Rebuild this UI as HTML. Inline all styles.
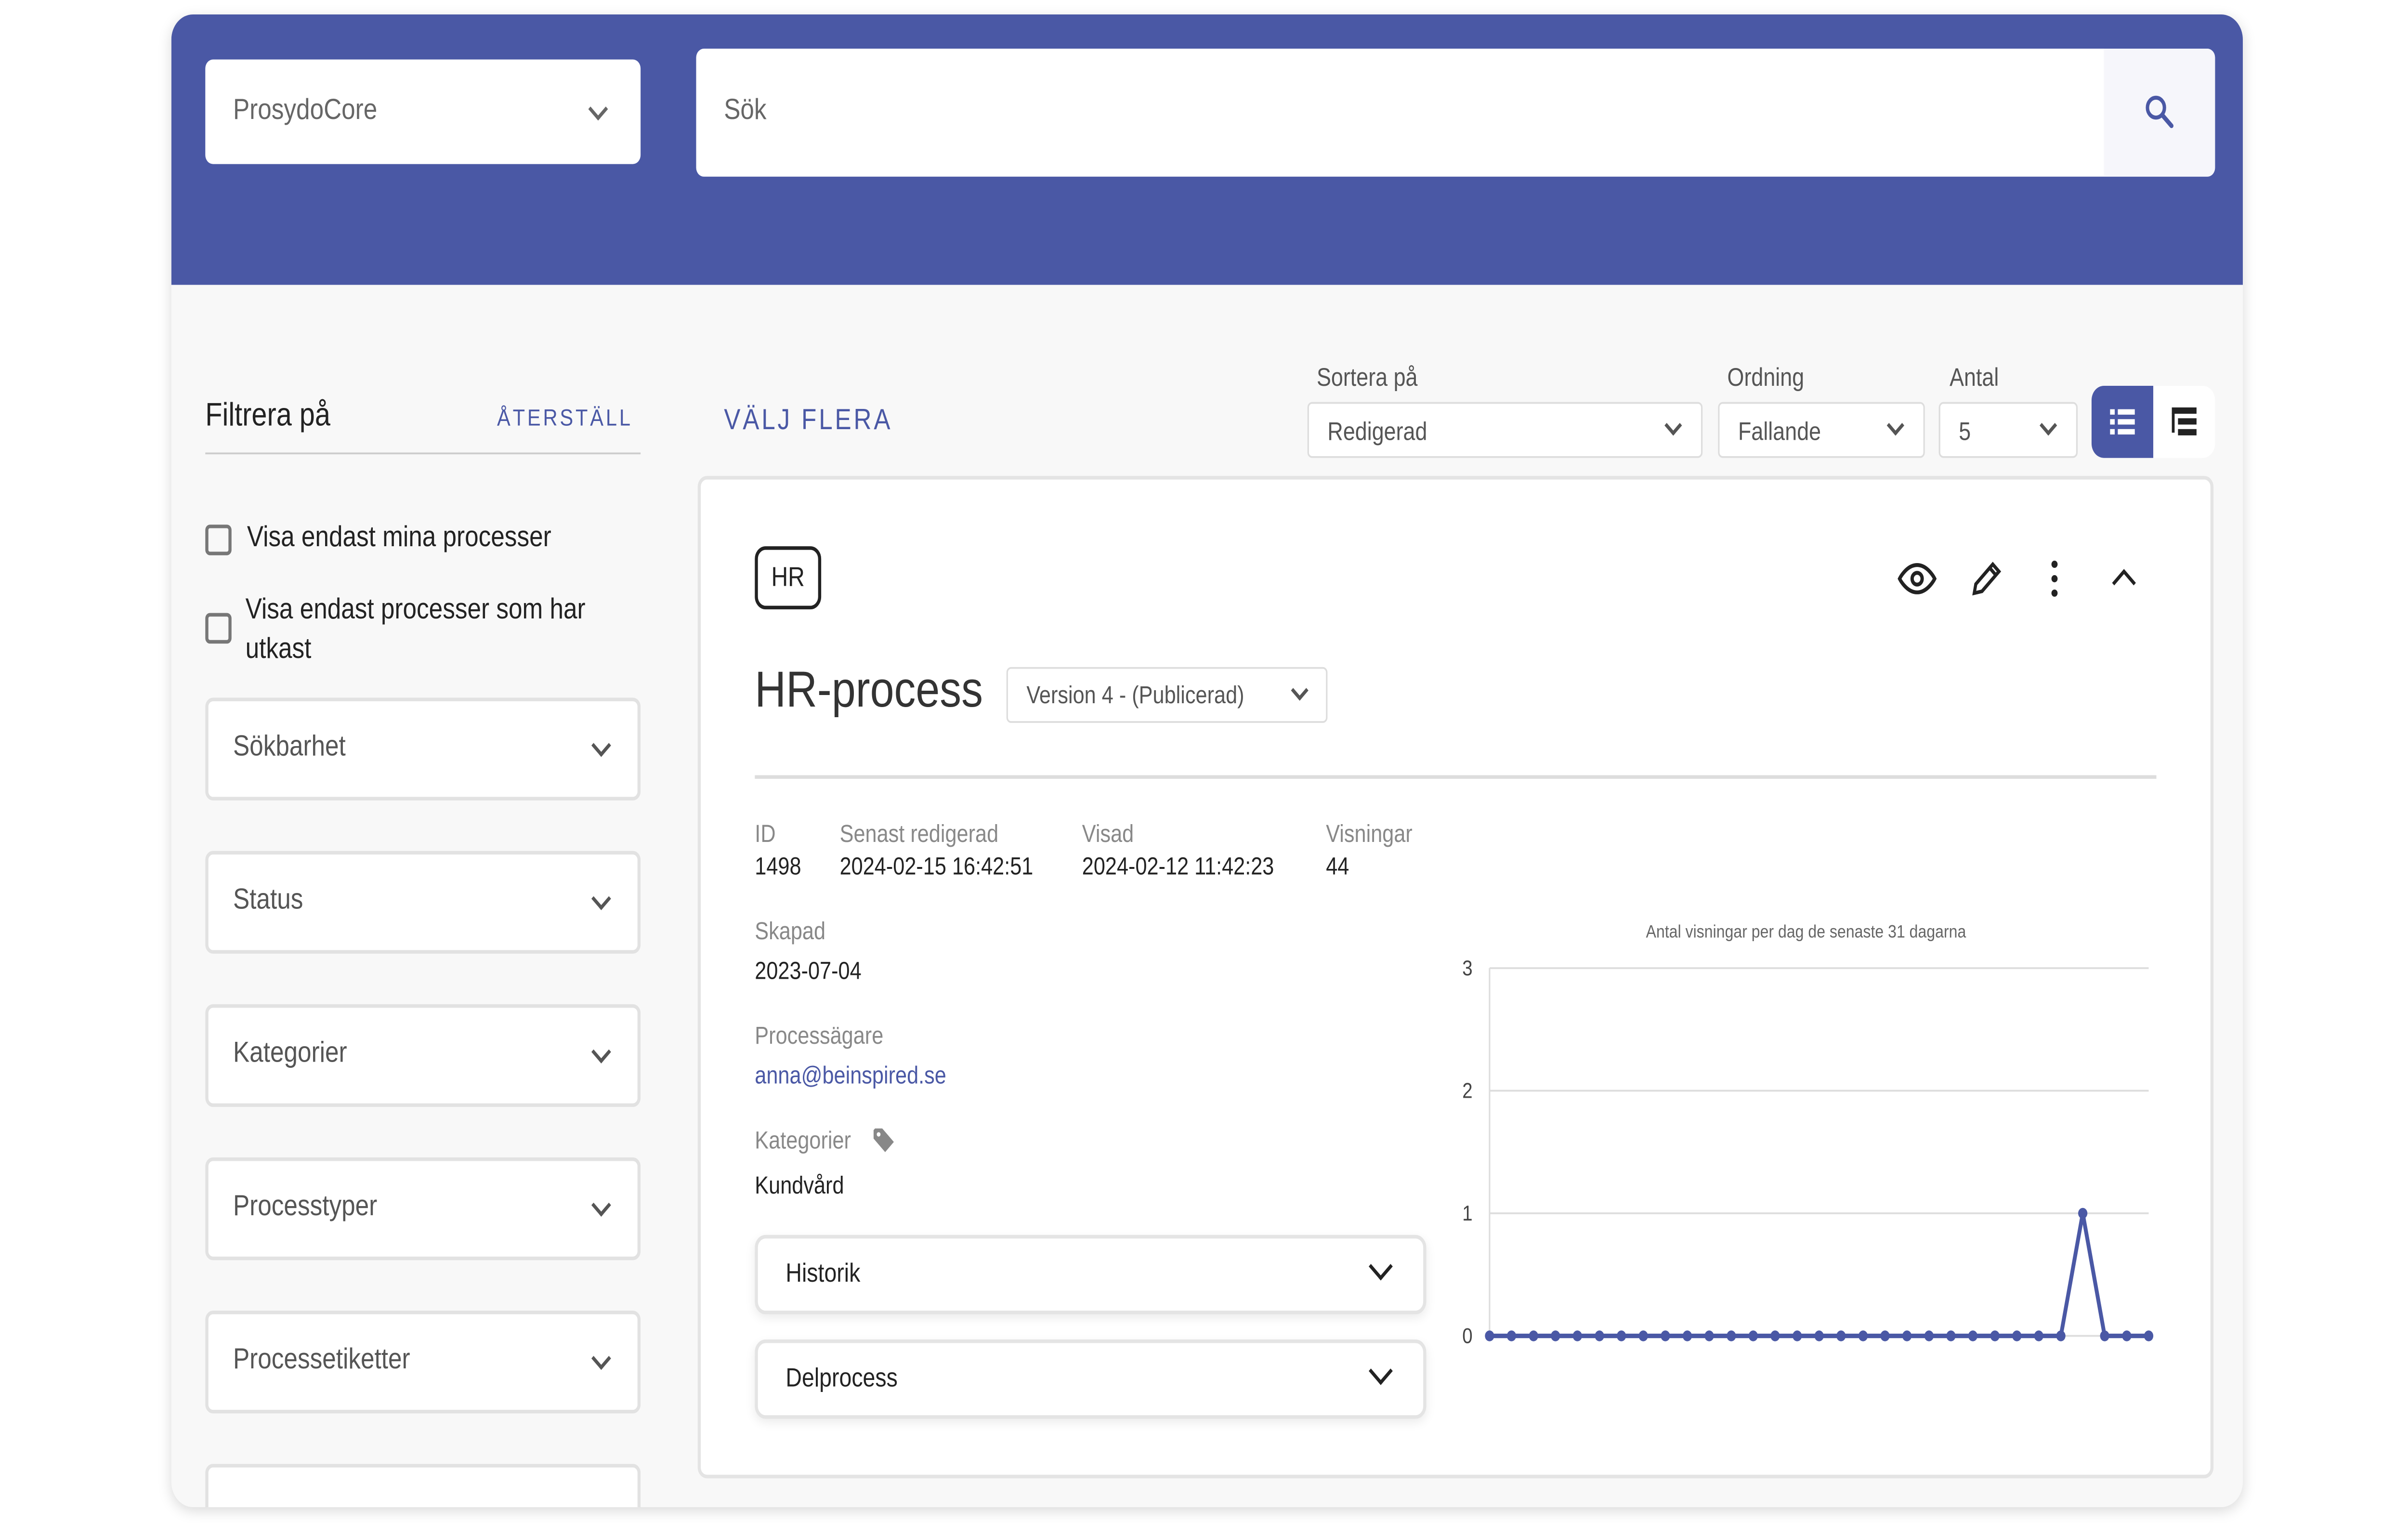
<!DOCTYPE html>
<html><head><meta charset="utf-8">
<style>
*{box-sizing:border-box;margin:0;padding:0}
html,body{width:100%;height:100%;overflow:hidden;background:#fff}
#root{position:fixed;left:0;top:0;width:100vw;height:100vh;display:block}
#w{position:relative;width:1560px;height:852px;overflow:hidden;font-family:"Liberation Sans","DejaVu Sans",sans-serif;color:#222;background:#fff}
.a{position:absolute}
.app{left:111px;top:8px;width:1342px;height:828px;background:#f8f8f8;border-radius:14px;overflow:hidden;box-shadow:0 2px 8px rgba(0,0,0,.15)}
.hdr{left:0;top:0;width:1342px;height:150px;background:#4a58a5}
.box{background:#fff;border-radius:5px}
.sel{background:#fff;border:2px solid #e2e2e2;border-radius:5px;width:282px;height:57px}
.sel span{position:absolute;left:16px;top:17px;font-size:16px;color:#555}
.chev{position:absolute;width:9px;height:9px;border-right:2px solid #555;border-bottom:2px solid #555;transform:rotate(45deg)}
.lbl{font-size:13.5px;color:#888}
.val{font-size:13.5px;color:#222}
.small{background:#fff;border:1px solid #ddd;border-radius:3px;height:31px}
.small span{position:absolute;left:12px;top:7px;font-size:14px;color:#555}
</style></head><body>
<svg id="root" viewBox="0 0 1560 852" preserveAspectRatio="none" xmlns="http://www.w3.org/2000/svg">
<foreignObject x="0" y="0" width="1560" height="852">
<div xmlns="http://www.w3.org/1999/xhtml" id="w">
<div class="a app"><div class="a hdr"></div></div>
<div class="a box" style="left:133px;top:33px;width:282px;height:58px"><span class="a" style="left:18px;top:20px;font-size:16px;color:#666">ProsydoCore</span><div class="chev" style="left:250px;top:23px;border-color:#666"></div></div>
<div class="a box" style="left:451px;top:27px;width:984px;height:71px;overflow:hidden"><span class="a" style="left:18px;top:26px;font-size:16px;color:#666">Sök</span>
 <div class="a" style="left:912px;top:0;width:72px;height:71px;background:#f6f6fb"></div>
 <svg class="a" style="left:937px;top:24px" width="22" height="22" viewBox="0 0 24 24"><circle cx="9.5" cy="9.5" r="6" fill="none" stroke="#4a58a5" stroke-width="2.4"/><path d="M14 14l6.5 6.5" stroke="#4a58a5" stroke-width="2.8" stroke-linecap="round"/></svg>
</div>
<div class="a" style="left:133px;top:220px;font-size:18px;color:#222">Filtrera på</div>
<div class="a" style="left:322px;top:224px;font-size:13px;letter-spacing:1.5px;color:#4a58a5">ÅTERSTÄLL</div>
<div class="a" style="left:133px;top:251px;width:282px;height:1px;background:#ccc"></div>
<div class="a" style="left:133px;top:291px;width:17px;height:17px;border:2px solid #777;border-radius:3px"></div>
<div class="a" style="left:160px;top:290px;font-size:16px">Visa endast mina processer</div>
<div class="a" style="left:133px;top:340px;width:17px;height:17px;border:2px solid #777;border-radius:3px"></div>
<div class="a" style="left:159px;top:328px;font-size:16px;line-height:22px;width:250px">Visa endast processer som har utkast</div>
<div class="a sel" style="left:133px;top:387px"><span>Sökbarhet</span><div class="chev" style="left:250px;top:20px"></div></div>
<div class="a sel" style="left:133px;top:472px"><span>Status</span><div class="chev" style="left:250px;top:20px"></div></div>
<div class="a sel" style="left:133px;top:557px"><span>Kategorier</span><div class="chev" style="left:250px;top:20px"></div></div>
<div class="a sel" style="left:133px;top:642px"><span>Processtyper</span><div class="chev" style="left:250px;top:20px"></div></div>
<div class="a sel" style="left:133px;top:727px"><span>Processetiketter</span><div class="chev" style="left:250px;top:20px"></div></div>
<div class="a" style="left:111px;top:812px;width:340px;height:24px;overflow:hidden"><div class="a sel" style="left:22px;top:0"></div></div>
<div class="a" style="left:469px;top:225px;font-size:16px;letter-spacing:1.5px;color:#4a58a5">VÄLJ FLERA</div>
<div class="a" style="left:853px;top:201px;font-size:14px;color:#555">Sortera på</div>
<div class="a" style="left:1119px;top:201px;font-size:14px;color:#555">Ordning</div>
<div class="a" style="left:1263px;top:201px;font-size:14px;color:#555">Antal</div>
<div class="a small" style="left:847px;top:223px;width:256px"><span>Redigerad</span><div class="chev" style="left:232px;top:8px;width:8px;height:8px"></div></div>
<div class="a small" style="left:1113px;top:223px;width:134px"><span>Fallande</span><div class="chev" style="left:110px;top:8px;width:8px;height:8px"></div></div>
<div class="a small" style="left:1256px;top:223px;width:90px"><span>5</span><div class="chev" style="left:66px;top:8px;width:8px;height:8px"></div></div>
<div class="a" style="left:1355px;top:214px;width:40px;height:40px;background:#4a58a5;border-radius:8px 0 0 8px"></div>
<svg class="a" style="left:1365px;top:224px" width="20" height="20" viewBox="0 0 20 20" fill="#fff"><rect x="2" y="3" width="3" height="3"/><rect x="7" y="3" width="11" height="3"/><rect x="2" y="8.5" width="3" height="3"/><rect x="7" y="8.5" width="11" height="3"/><rect x="2" y="14" width="3" height="3"/><rect x="7" y="14" width="11" height="3"/></svg>
<div class="a" style="left:1395px;top:214px;width:40px;height:40px;background:#fff;border-radius:0 8px 8px 0"></div>
<svg class="a" style="left:1405px;top:224px" width="20" height="20" viewBox="0 0 20 20" fill="#222"><rect x="2" y="2" width="16" height="3.5"/><rect x="6" y="8" width="12" height="3.5"/><rect x="6" y="14" width="12" height="3.5"/><rect x="2" y="5" width="1.8" height="11"/></svg>
<div class="a" style="left:452px;top:264px;width:982px;height:556px;background:#fff;border:2px solid #e4e4e4;border-radius:6px"></div>
<div class="a" style="left:489px;top:303px;width:43px;height:35px;border:2px solid #222;border-radius:7px;font-size:15px;text-align:center;line-height:31px">HR</div>
<svg class="a" style="left:1229px;top:308px" width="26" height="26" viewBox="0 0 24 24" fill="none" stroke="#222" stroke-width="2"><path d="M1.5 12S5.5 5 12 5s10.5 7 10.5 7-4 7-10.5 7S1.5 12 1.5 12z"/><circle cx="12" cy="12" r="3"/></svg>
<svg class="a" style="left:1275px;top:309px" width="24" height="24" viewBox="0 0 24 24" fill="none" stroke="#222" stroke-width="2"><path d="M4 20l1-5L16 4l4 4L9 19z M14 6l4 4"/></svg>
<svg class="a" style="left:1320px;top:309px" width="22" height="24" viewBox="0 0 22 24" fill="#222"><circle cx="11" cy="4" r="2"/><circle cx="11" cy="12" r="2"/><circle cx="11" cy="20" r="2"/></svg>
<svg class="a" style="left:1365px;top:309px" width="22" height="22" viewBox="0 0 22 22" fill="none" stroke="#222" stroke-width="2"><path d="M4 15l7-7 7 7"/></svg>
<div class="a" style="left:489px;top:367px;font-size:28px;color:#333">HR-process</div>
<div class="a small" style="left:652px;top:370px;width:208px;height:31px"><span style="font-size:13.5px">Version 4 - (Publicerad)</span><div class="chev" style="left:185px;top:8px;width:8px;height:8px"></div></div>
<div class="a" style="left:489px;top:430px;width:908px;height:2px;background:#ddd"></div>
<div class="a lbl" style="left:489px;top:455px">ID</div><div class="a val" style="left:489px;top:473px">1498</div>
<div class="a lbl" style="left:544px;top:455px">Senast redigerad</div><div class="a val" style="left:544px;top:473px">2024-02-15 16:42:51</div>
<div class="a lbl" style="left:701px;top:455px">Visad</div><div class="a val" style="left:701px;top:473px">2024-02-12 11:42:23</div>
<div class="a lbl" style="left:859px;top:455px">Visningar</div><div class="a val" style="left:859px;top:473px">44</div>
<div class="a lbl" style="left:489px;top:509px">Skapad</div><div class="a val" style="left:489px;top:531px">2023-07-04</div>
<div class="a lbl" style="left:489px;top:567px">Processägare</div><div class="a val" style="left:489px;top:589px;color:#4a58a5">anna@beinspired.se</div>
<div class="a lbl" style="left:489px;top:625px">Kategorier</div>
<svg class="a" style="left:565px;top:625px" width="15" height="15" viewBox="0 0 16 16"><path d="M1 2v5l8 8 6-6-8-8H2z" fill="#888"/><circle cx="4.5" cy="4.5" r="1.3" fill="#fff"/></svg>
<div class="a val" style="left:489px;top:650px">Kundvård</div>
<div class="a" style="left:489px;top:685px;width:435px;height:44px;border:2px solid #e4e4e4;border-radius:7px;box-shadow:0 2px 6px rgba(0,0,0,.08)"><span class="a" style="left:18px;top:12px;font-size:14.5px">Historik</span><div class="chev" style="left:398px;top:10px;width:11px;height:11px;border-color:#222"></div></div>
<div class="a" style="left:489px;top:743px;width:435px;height:44px;border:2px solid #e4e4e4;border-radius:7px;box-shadow:0 2px 6px rgba(0,0,0,.08)"><span class="a" style="left:18px;top:12px;font-size:14.5px">Delprocess</span><div class="chev" style="left:398px;top:10px;width:11px;height:11px;border-color:#222"></div></div>
<svg class="a" style="left:930px;top:505px" width="480" height="250" viewBox="930 505 480 250" font-family="Liberation Sans,sans-serif">
<text x="1170" y="520" font-size="10" fill="#666" text-anchor="middle">Antal visningar per dag de senaste 31 dagarna</text>
<g stroke="#ddd" stroke-width="1"><line x1="965" y1="537" x2="1392" y2="537"/><line x1="965" y1="605" x2="1392" y2="605"/><line x1="965" y1="673" x2="1392" y2="673"/><line x1="965" y1="741" x2="1392" y2="741"/><line x1="965" y1="537" x2="965" y2="741"/></g>
<g font-size="12" fill="#444" text-anchor="end"><text x="954" y="541">3</text><text x="954" y="609">2</text><text x="954" y="677">1</text><text x="954" y="745">0</text></g>
<polyline fill="none" stroke="#4a58a5" stroke-width="2.5" points="965,741 1335.1,741 1349.3,673 1363.5,741 1392,741"/>
<g fill="#4a58a5">
<circle cx="965" cy="741" r="3"/><circle cx="979.2" cy="741" r="3"/><circle cx="993.5" cy="741" r="3"/><circle cx="1007.7" cy="741" r="3"/><circle cx="1021.9" cy="741" r="3"/><circle cx="1036.2" cy="741" r="3"/><circle cx="1050.4" cy="741" r="3"/><circle cx="1064.6" cy="741" r="3"/><circle cx="1078.9" cy="741" r="3"/><circle cx="1093.1" cy="741" r="3"/><circle cx="1107.3" cy="741" r="3"/><circle cx="1121.6" cy="741" r="3"/><circle cx="1135.8" cy="741" r="3"/><circle cx="1150" cy="741" r="3"/><circle cx="1164.3" cy="741" r="3"/><circle cx="1178.5" cy="741" r="3"/><circle cx="1192.7" cy="741" r="3"/><circle cx="1207" cy="741" r="3"/><circle cx="1221.2" cy="741" r="3"/><circle cx="1235.4" cy="741" r="3"/><circle cx="1249.7" cy="741" r="3"/><circle cx="1263.9" cy="741" r="3"/><circle cx="1278.1" cy="741" r="3"/><circle cx="1292.4" cy="741" r="3"/><circle cx="1306.6" cy="741" r="3"/><circle cx="1320.8" cy="741" r="3"/><circle cx="1335.1" cy="741" r="3"/><circle cx="1349.3" cy="673" r="3"/><circle cx="1363.5" cy="741" r="3"/><circle cx="1377.8" cy="741" r="3"/><circle cx="1392" cy="741" r="3"/>
</g>
</svg>
</div>
</foreignObject>
</svg>
</body></html>
